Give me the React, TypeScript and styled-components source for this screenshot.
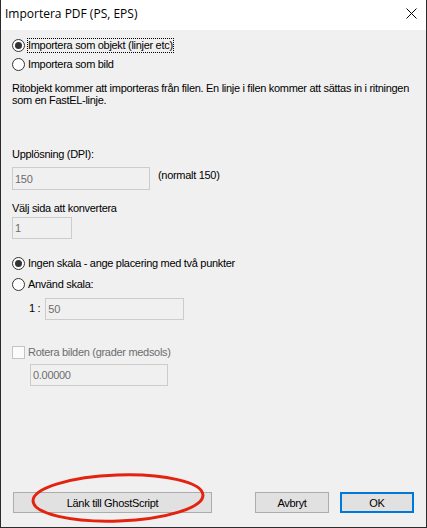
import React from "react";
import styled, { createGlobalStyle } from "styled-components";

const Global = createGlobalStyle`
  html, body { margin: 0; padding: 0; background: #f0f0f0; }
  body { font-family: "Liberation Sans", Arial, sans-serif; font-size: 11px; letter-spacing: -0.3px; color: #000; }
`;

const Window = styled.div`
  position: relative;
  box-sizing: border-box;
  width: 427px;
  height: 528px;
  display: flex;
  flex-direction: column;
  border: 1px solid #2b2b2b;
  border-top: none;
  background: #f0f0f0;
`;

const TitleBar = styled.div`
  height: 30px;
  flex: none;
  background: #ffffff;
  display: flex;
  align-items: center;
  justify-content: space-between;
  padding-left: 4px;
  padding-right: 9px;
  padding-bottom: 3px;
  box-sizing: border-box;
`;

const Title = styled.span`
  font-family: "Open Sans", "Noto Sans", sans-serif;
  font-size: 12px;
  letter-spacing: 0;
  color: #000;
`;

const Client = styled.div`
  flex: 1;
  display: flex;
  flex-direction: column;
  padding-left: 11px;
  padding-right: 11px;
`;

const Row = styled.div<{ $mt: number; $indent?: number; $h?: number }>`
  display: flex;
  align-items: center;
  margin-top: ${(p) => p.$mt}px;
  margin-left: ${(p) => p.$indent ?? 0}px;
  height: ${(p) => p.$h ?? 16}px;
  flex: none;
`;

const RadioCircle = styled.span<{ $checked?: boolean }>`
  box-sizing: border-box;
  width: 13px;
  height: 13px;
  border: 1px solid #333333;
  border-radius: 50%;
  background: #ffffff;
  display: flex;
  align-items: center;
  justify-content: center;
  flex: none;
  &::after {
    content: "";
    width: 7px;
    height: 7px;
    border-radius: 50%;
    background: #333333;
    display: ${(p) => (p.$checked ? "block" : "none")};
  }
`;

const CheckBox = styled.span`
  box-sizing: border-box;
  width: 13px;
  height: 13px;
  border: 1px solid #c4c4c4;
  background: #fbfbfb;
  flex: none;
`;

const OptionText = styled.span<{ $focus?: boolean; $disabled?: boolean }>`
  margin-left: 2px;
  padding: 1px 1px;
  line-height: 13px;
  color: ${(p) => (p.$disabled ? "#6d6d6d" : "#000")};
  outline: ${(p) => (p.$focus ? "1px dotted #000" : "none")};
  outline-offset: -1px;
  white-space: nowrap;
`;

const Paragraph = styled.p<{ $mt: number }>`
  margin: ${(p) => p.$mt}px 0 0 0;
  line-height: 12px;
  flex: none;
`;

const Label = styled.div<{ $mt: number }>`
  margin-top: ${(p) => p.$mt}px;
  line-height: 13px;
  height: 13px;
  flex: none;
  white-space: nowrap;
`;

const InputRow = styled.div<{ $mt: number; $indent?: number }>`
  display: flex;
  align-items: flex-start;
  margin-top: ${(p) => p.$mt}px;
  margin-left: ${(p) => p.$indent ?? 0}px;
  flex: none;
`;

const Field = styled.div<{ $w: number; $h?: number; $ml?: number }>`
  box-sizing: border-box;
  width: ${(p) => p.$w}px;
  height: ${(p) => p.$h ?? 22}px;
  margin-left: ${(p) => p.$ml ?? 0}px;
  border: 1px solid #cccccc;
  background: #f0f0f0;
  color: #6d6d6d;
  padding-left: 2px;
  display: flex;
  align-items: center;
  flex: none;
`;

const SideText = styled.span<{ $ml: number; $mt?: number }>`
  margin-left: ${(p) => p.$ml}px;
  margin-top: ${(p) => p.$mt ?? 0}px;
  line-height: 13px;
  white-space: nowrap;
`;

const ButtonBar = styled.div`
  margin-top: auto;
  margin-bottom: 14px;
  margin-left: 1px;
  display: flex;
  align-items: center;
  flex: none;
`;

const Button = styled.div<{ $w: number; $ml?: number; $default?: boolean }>`
  box-sizing: border-box;
  width: ${(p) => p.$w}px;
  height: 21px;
  margin-left: ${(p) => p.$ml ?? 0}px;
  background: #e1e1e1;
  border: ${(p) => (p.$default ? "2px solid #0078d7" : "1px solid #adadad")};
  display: flex;
  align-items: center;
  justify-content: center;
  color: #000;
  flex: none;
`;

const Annotation = styled.svg`
  position: absolute;
  left: 28px;
  top: 471px;
  width: 180px;
  height: 56px;
  pointer-events: none;
  overflow: visible;
`;

export default function App() {
  return (
    <>
      <Global />
      <Window>
        <TitleBar>
          <Title>Importera PDF (PS, EPS)</Title>
          <svg width="11" height="11" viewBox="0 0 11 11">
            <path d="M0.5 0.5 L10.5 10.5 M10.5 0.5 L0.5 10.5" stroke="#000" strokeWidth="1" fill="none" />
          </svg>
        </TitleBar>
        <Client>
          <Row $mt={7}>
            <RadioCircle $checked />
            <OptionText $focus>Importera som objekt (linjer etc)</OptionText>
          </Row>
          <Row $mt={3}>
            <RadioCircle />
            <OptionText>Importera som bild</OptionText>
          </Row>
          <Paragraph $mt={10}>
            Ritobjekt kommer att importeras från filen. En linje i filen kommer att sättas in i ritningen som en FastEL-linje.
          </Paragraph>
          <Label $mt={42}>Upplösning (DPI):</Label>
          <InputRow $mt={6}>
            <Field $w={138} $h={23}>150</Field>
            <SideText $ml={8} $mt={2}>(normalt 150)</SideText>
          </InputRow>
          <Label $mt={12}>Välj sida att konvertera</Label>
          <InputRow $mt={2}>
            <Field $w={60}>1</Field>
          </InputRow>
          <Row $mt={16}>
            <RadioCircle $checked />
            <OptionText>Ingen skala - ange placering med två punkter</OptionText>
          </Row>
          <Row $mt={5}>
            <RadioCircle />
            <OptionText>Använd skala:</OptionText>
          </Row>
          <InputRow $mt={6} $indent={17}>
            <SideText $ml={0} $mt={4}>1 :</SideText>
            <Field $w={139} $ml={5}>50</Field>
          </InputRow>
          <Row $mt={24}>
            <CheckBox />
            <OptionText $disabled>Rotera bilden (grader medsols)</OptionText>
          </Row>
          <InputRow $mt={4} $indent={18}>
            <Field $w={138}>0.00000</Field>
          </InputRow>
          <ButtonBar>
            <Button $w={199}>Länk till GhostScript</Button>
            <Button $w={74} $ml={43}>Avbryt</Button>
            <Button $w={74} $ml={11} $default>OK</Button>
          </ButtonBar>
        </Client>
        <Annotation viewBox="0 0 180 56">
          <ellipse cx="89" cy="27" rx="85" ry="23" fill="none" stroke="#e3230f" strokeWidth="3" transform="rotate(-2 89 27)" />
        </Annotation>
      </Window>
    </>
  );
}
